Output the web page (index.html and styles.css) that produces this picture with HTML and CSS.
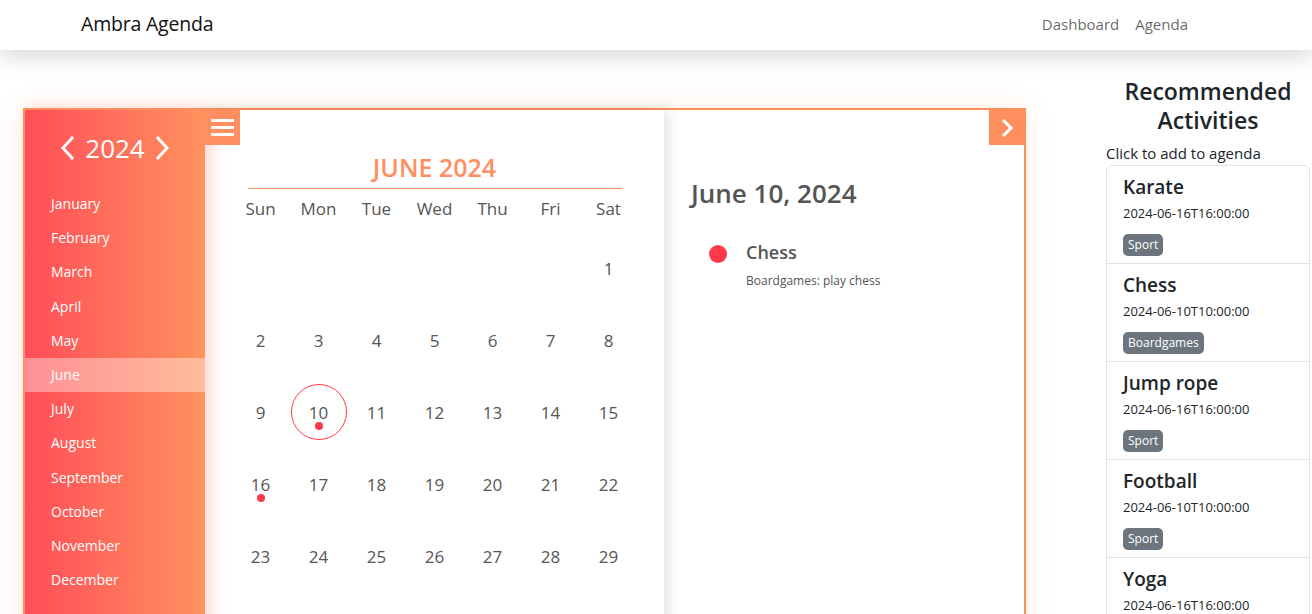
FILE: index.html
```html
<!DOCTYPE html>
<html lang="en">
<head>
<meta charset="utf-8">
<title>Ambra Agenda</title>
<link rel="stylesheet" href="styles.css">
</head>
<body>
<nav class="navbar">
  <a class="brand" href="#">Ambra Agenda</a>
  <div class="nav-links">
    <a href="#">Dashboard</a>
    <a href="#">Agenda</a>
  </div>
</nav>
<main class="page">
  <section class="calendar">
    <aside class="sidebar">
      <div class="year">
        <svg class="chev" width="16" height="26" viewBox="0 0 16 26"><polyline points="13,2 3,13 13,24" fill="none" stroke="#fff" stroke-width="3"/></svg>
        <span class="year-num">2024</span>
        <svg class="chev" width="16" height="26" viewBox="0 0 16 26"><polyline points="3,2 13,13 3,24" fill="none" stroke="#fff" stroke-width="3"/></svg>
      </div>
      <ul class="months">
        <li>January</li><li>February</li><li>March</li><li>April</li><li>May</li>
        <li class="active">June</li><li>July</li><li>August</li><li>September</li>
        <li>October</li><li>November</li><li>December</li>
      </ul>
    </aside>
    <div class="month-view">
      <button class="menu-btn" aria-label="menu">
        <svg width="23" height="18" viewBox="0 0 23 18"><rect x="0" y="0" width="23" height="3" fill="#fff"/><rect x="0" y="7" width="23" height="3" fill="#fff"/><rect x="0" y="14" width="23" height="3" fill="#fff"/></svg>
      </button>
      <h2 class="month-title">JUNE 2024</h2>
      <div class="weekdays">
        <span>Sun</span><span>Mon</span><span>Tue</span><span>Wed</span><span>Thu</span><span>Fri</span><span>Sat</span>
      </div>
      <div class="days">
        <span></span><span></span><span></span><span></span><span></span><span></span><span class="day">1</span>
        <span class="day">2</span><span class="day">3</span><span class="day">4</span><span class="day">5</span><span class="day">6</span><span class="day">7</span><span class="day">8</span>
        <span class="day">9</span><span class="day selected has-event">10</span><span class="day">11</span><span class="day">12</span><span class="day">13</span><span class="day">14</span><span class="day">15</span>
        <span class="day has-event">16</span><span class="day">17</span><span class="day">18</span><span class="day">19</span><span class="day">20</span><span class="day">21</span><span class="day">22</span>
        <span class="day">23</span><span class="day">24</span><span class="day">25</span><span class="day">26</span><span class="day">27</span><span class="day">28</span><span class="day">29</span>
        <span class="day">30</span>
      </div>
    </div>
    <div class="day-view">
      <button class="next-btn" aria-label="next">
        <svg width="14" height="20" viewBox="0 0 14 20"><polyline points="3,2 11,10 3,18" fill="none" stroke="#fff" stroke-width="3"/></svg>
      </button>
      <h2 class="day-title">June 10, 2024</h2>
      <div class="event">
        <span class="event-dot"></span>
        <div class="event-body">
          <div class="event-name">Chess</div>
          <div class="event-desc">Boardgames: play chess</div>
        </div>
      </div>
    </div>
  </section>
  <section class="recommend">
    <h3 class="rec-title">Recommended Activities</h3>
    <p class="rec-hint">Click to add to agenda</p>
    <ul class="rec-list">
      <li class="rec-item"><div class="rec-name">Karate</div><div class="rec-date">2024-06-16T16:00:00</div><span class="badge">Sport</span></li>
      <li class="rec-item"><div class="rec-name">Chess</div><div class="rec-date">2024-06-10T10:00:00</div><span class="badge">Boardgames</span></li>
      <li class="rec-item"><div class="rec-name">Jump rope</div><div class="rec-date">2024-06-16T16:00:00</div><span class="badge">Sport</span></li>
      <li class="rec-item"><div class="rec-name">Football</div><div class="rec-date">2024-06-10T10:00:00</div><span class="badge">Sport</span></li>
      <li class="rec-item"><div class="rec-name">Yoga</div><div class="rec-date">2024-06-16T16:00:00</div><span class="badge">Sport</span></li>
    </ul>
  </section>
</main>
</body>
</html>
```
FILE: styles.css
```css
* { box-sizing: border-box; }
html, body { margin: 0; padding: 0; }
body {
  font-family: "Open Sans", "Noto Sans", sans-serif;
  color: #212529;
  background: #fff;
  overflow: hidden;
  height: 614px;
}
.navbar {
  height: 50px;
  display: flex;
  align-items: center;
  justify-content: space-between;
  padding: 0 124px 3px 81px;
  background: #fff;
  box-shadow: 0 6px 22px rgba(0,0,0,0.17);
  position: relative;
  z-index: 2;
}
.brand {
  font-size: 19.5px;
  color: #111;
  text-decoration: none;
  letter-spacing: -0.2px;
}
.nav-links { display: flex; gap: 16px; }
.nav-links a {
  font-size: 15px;
  color: rgba(0,0,0,0.62);
  text-decoration: none;
}
.page {
  display: flex;
  align-items: flex-start;
  padding-left: 23px;
}
.calendar {
  margin-top: 58px;
  width: 1003px;
  height: 540px;
  border: 2px solid #ff8f5f;
  display: flex;
  background: #fff;
  box-shadow: 0 0 24px rgba(255,143,95,0.18);
  flex-shrink: 0;
}
.sidebar {
  width: 180px;
  background: linear-gradient(90deg, #ff4d58 0%, #ff935e 100%);
  color: #fff;
  box-shadow: 6px 0 14px rgba(255,140,120,0.35);
  position: relative;
  z-index: 1;
  flex-shrink: 0;
}
.year {
  height: 77px;
  padding-bottom: 2px;
  display: flex;
  align-items: center;
  justify-content: center;
  gap: 9px;
}
.year-num { font-size: 26px; line-height: 1; }
.months { list-style: none; margin: 0; padding: 0; }
.months li {
  height: 34.2px;
  line-height: 34.2px;
  padding-left: 26px;
  font-size: 14px;
}
.months li.active { background: rgba(255,255,255,0.38); }
.month-view {
  width: 459px;
  position: relative;
  box-shadow: 4px 0 14px rgba(0,0,0,0.12);
  z-index: 0;
  background: #fff;
  flex-shrink: 0;
  display: flex;
  flex-direction: column;
  align-items: center;
  overflow: hidden;
}
.menu-btn, .next-btn {
  position: absolute;
  top: 0;
  width: 35px;
  height: 35px;
  border: 0;
  padding: 0;
  background: #ff8f5f;
  display: flex;
  align-items: center;
  justify-content: center;
}
.menu-btn { left: 0; }
.next-btn { right: 0; }
.month-title {
  margin: 39px 0 0;
  width: 374px;
  text-align: center;
  font-size: 25px;
  line-height: 36px;
  font-weight: 600;
  color: #ff8f5f;
  padding-bottom: 3px;
  border-bottom: 1px solid #ff8f5f;
}
.weekdays, .days {
  width: 406px;
  display: grid;
  grid-template-columns: repeat(7, 58px);
  text-align: center;
  color: #555;
}
.weekdays {
  margin-top: 8px;
  font-size: 17px;
  line-height: 24px;
}
.days {
  margin-top: 11px;
  grid-auto-rows: 72px;
  font-size: 17px;
}
.days span {
  display: flex;
  align-items: center;
  justify-content: center;
  position: relative;
}
.day.selected::before {
  content: "";
  position: absolute;
  width: 54px;
  height: 54px;
  border: 1px solid #ff3a48;
  border-radius: 50%;
  left: 50%;
  top: 50%;
  transform: translate(-50%, -50%);
}
.day.has-event::after {
  content: "";
  position: absolute;
  width: 8px;
  height: 8px;
  border-radius: 50%;
  background: #ff3a48;
  left: 50%;
  top: 50%;
  transform: translate(-50%, 10px);
}
.day-view {
  flex: 1;
  position: relative;
  padding-left: 27px;
}
.day-title {
  margin: 66px 0 0;
  font-size: 26px;
  line-height: 34px;
  font-weight: 600;
  color: #555;
}
.event {
  display: flex;
  align-items: flex-start;
  margin-top: 30px;
  padding-left: 18px;
}
.event-dot {
  width: 18px;
  height: 18px;
  border-radius: 50%;
  background: #ff3a48;
  margin-top: 5px;
  flex-shrink: 0;
}
.event-body { margin-left: 19px; color: #555; }
.event-name { font-size: 18px; font-weight: 600; line-height: 24px; }
.event-desc { font-size: 12px; line-height: 18px; margin-top: 8px; }
.recommend {
  margin-left: 80px;
  width: 204px;
  flex-shrink: 0;
}
.rec-title {
  margin: 27px 0 0;
  text-align: center;
  font-size: 23px;
  line-height: 29px;
  font-weight: 600;
}
.rec-hint {
  margin: 8px 0 0;
  font-size: 15px;
  line-height: 21px;
}
.rec-list {
  list-style: none;
  margin: 1px 0 0;
  padding: 0;
  border: 1px solid #dee2e6;
  border-radius: 6px;
  overflow: hidden;
}
.rec-item {
  height: 98px;
  padding: 8px 16px;
  border-bottom: 1px solid #dee2e6;
}
.rec-name { font-size: 19px; font-weight: 600; line-height: 26px; }
.rec-date { font-size: 13px; line-height: 20px; margin-top: 3px; }
.badge {
  display: inline-block;
  margin-top: 11px;
  background: #6c757d;
  color: #fff;
  font-size: 12px;
  line-height: 22px;
  padding: 0 5px;
  border-radius: 5px;
}
```
